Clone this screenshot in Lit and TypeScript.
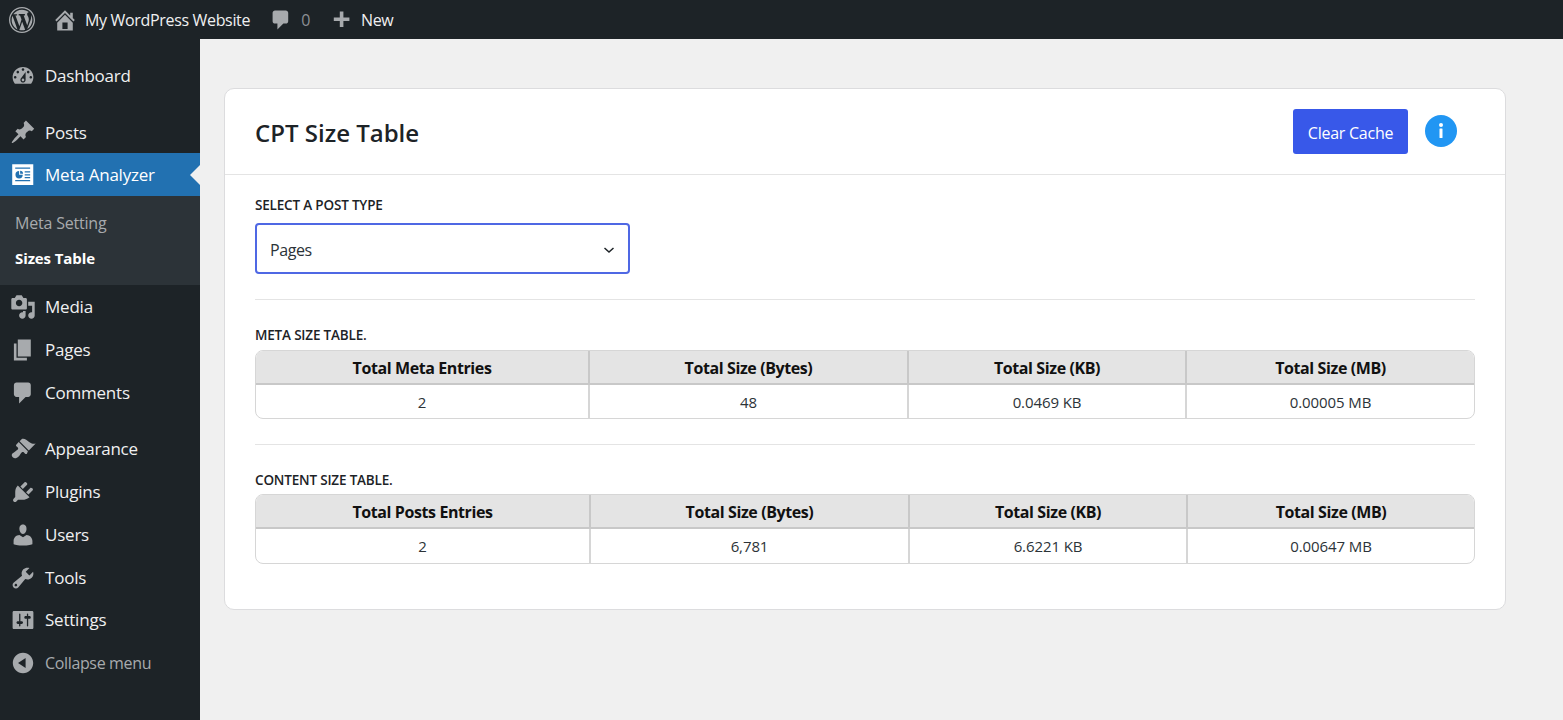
import { LitElement, html, css, svg } from "lit";
import { customElement } from "lit/decorators.js";

const icons: Record<string, string> = {
  wordpress: "M20 10c0-5.52-4.48-10-10-10S0 4.48 0 10s4.48 10 10 10 10-4.48 10-10zM10 1.01c4.97 0 8.99 4.02 8.99 8.99s-4.02 8.99-8.99 8.99S1.01 14.97 1.01 10 5.03 1.01 10 1.01zM8.01 14.82L4.96 6.61c.49-.03 1.05-.08 1.05-.08.43-.05.38-1.01-.06-.99 0 0-1.29.1-2.13.1-.15 0-.33 0-.52-.01 1.44-2.17 3.9-3.6 6.7-3.6 2.09 0 3.99.79 5.41 2.09-.6-.08-1.45.35-1.45 1.42 0 .66.38 1.22.79 1.88.31.54.5 1.22.5 2.21 0 1.34-1.27 4.48-1.27 4.48l-2.71-7.5c.48-.03.75-.16.75-.16.43-.05.38-1.1-.05-1.08 0 0-1.3.11-2.14.11-.78 0-2.11-.11-2.11-.11-.43-.02-.48 1.06-.05 1.08l.84.08 1.12 3.04zm6.02 2.15L16.64 10s.67-1.69.39-3.81c.63 1.14.94 2.42.94 3.81 0 2.96-1.56 5.58-3.94 6.97zM2.68 6.77L6.5 17.25c-2.67-1.3-4.47-4.08-4.47-7.25 0-1.16.2-2.23.65-3.23zm7.45 4.53l2.29 6.25c-.75.27-1.57.42-2.42.42-.72 0-1.41-.11-2.06-.3z",
  home: "M16 8.5l1.53 1.53-1.06 1.06L10 4.62l-6.47 6.47-1.06-1.06L10 2.5l4 4v-2h2v4zm-6-2.46l6 5.99V18H4v-5.97zM12 17v-5H8v5h4z",
  plus: "M17 7v3h-5v5H9v-5H4V7h5V2h3v5h5z",
  dashboard: "M3.76 16h12.48c1.1-1.37 1.76-3.11 1.76-5 0-4.42-3.58-8-8-8s-8 3.58-8 8c0 1.89.66 3.63 1.76 5zM10 4c.55 0 1 .45 1 1s-.45 1-1 1-1-.45-1-1 .45-1 1-1zM6 6c.55 0 1 .45 1 1s-.45 1-1 1-1-.45-1-1 .45-1 1-1zm8 0c.55 0 1 .45 1 1s-.45 1-1 1-1-.45-1-1 .45-1 1-1zm-5.37 5.55L12 7v6c0 1.1-.9 2-2 2s-2-.9-2-2c0-.57.24-1.08.63-1.45zM4 10c.55 0 1 .45 1 1s-.45 1-1 1-1-.45-1-1 .45-1 1-1zm12 0c.55 0 1 .45 1 1s-.45 1-1 1-1-.45-1-1 .45-1 1-1zm-5 3c0-.55-.45-1-1-1s-1 .45-1 1 .45 1 1 1 1-.45 1-1z",
  post: "M10.44 3.02l1.82-1.82 6.36 6.35-1.83 1.82c-1.05-.68-2.48-.57-3.41.36l-.75.75c-.92.93-1.04 2.35-.35 3.41l-1.83 1.82-2.41-2.41-2.8 2.79c-.42.42-3.38 2.71-3.8 2.29s1.86-3.39 2.28-3.81l2.79-2.79L4.1 9.36l1.83-1.82c1.05.69 2.48.57 3.4-.36l.75-.75c.93-.92 1.05-2.35.36-3.41z",
  media: "M13 11V4c0-.55-.45-1-1-1h-1.67L9 1H5L3.67 3H2c-.55 0-1 .45-1 1v7c0 .55.45 1 1 1h10c.55 0 1-.45 1-1zM7 4.5c1.38 0 2.5 1.12 2.5 2.5S8.38 9.5 7 9.5 4.5 8.38 4.5 7 5.62 4.5 7 4.5zM14 6h5v10.5c0 1.38-1.12 2.5-2.5 2.5S14 17.88 14 16.5s1.12-2.5 2.5-2.5c.17 0 .34.02.5.05V9h-3V6zm-4 8.05V13h2v3.5c0 1.38-1.12 2.5-2.5 2.5S7 17.88 7 16.5 8.12 14 9.5 14c.17 0 .34.02.5.05z",
  page: "M6 15V2h10v13H6zm-1 1h8v2H3V5h2v11z",
  comment: "M5 2h9c1.1 0 2 .9 2 2v7c0 1.1-.9 2-2 2h-2l-5 5v-5H5c-1.1 0-2-.9-2-2V4c0-1.1.9-2 2-2z",
  appearance: "M14.48 11.06L7.41 3.99l1.5-1.5c.5-.56 2.3-.47 3.51.32 1.21.8 1.43 1.28 2.91 2.1 1.18.64 2.45 1.26 4.45.85zm-.71.71L6.7 4.7 4.93 6.47c-.39.39-.39 1.02 0 1.41l1.06 1.06c.39.39.39 1.03 0 1.42-.6.6-1.43 1.11-2.21 1.69-.35.26-.7.53-1.01.84C1.43 13.23.78 15 2.14 16.36s3.13.71 4.47-.63c.31-.31.58-.66.84-1.01.58-.78 1.09-1.61 1.69-2.21.39-.39 1.03-.39 1.42 0l1.06 1.06c.39.39 1.02.39 1.41 0z",
  plugins: "M13.11 4.36L9.87 7.6 8 5.73l3.24-3.24c.35-.34 1.05-.2 1.56.32.52.51.66 1.21.31 1.55zm-8 1.77l.91-1.12 9.01 9.01-1.19.84c-.71.71-2.63 1.16-3.82 1.16H6.14L4.9 17.26c-.59.59-1.54.59-2.12 0-.59-.58-.59-1.53 0-2.12l1.24-1.24v-3.88c0-1.13.4-3.19 1.09-3.89zm7.26 3.97l3.24-3.24c.34-.35 1.04-.21 1.55.31.52.51.66 1.21.31 1.55l-3.24 3.25z",
  users: "M10 9.25c-2.27 0-2.73-3.44-2.73-3.44C7 4.02 7.82 2 9.97 2c2.16 0 2.98 2.02 2.71 3.81 0 0-.41 3.44-2.68 3.44zm0 2.57L12.72 10c2.39 0 4.52 2.33 4.52 4.53v2.49s-3.65 1.13-7.24 1.13c-3.65 0-7.24-1.13-7.24-1.13v-2.49c0-2.25 1.94-4.48 4.47-4.48z",
  tools: "M16.68 9.77c-1.34 1.34-3.3 1.67-4.95.99l-5.41 6.52c-.99.99-2.59.99-3.58 0s-.99-2.59 0-3.57l6.52-5.42c-.68-1.65-.35-3.61.99-4.95 1.28-1.28 3.12-1.62 4.72-1.06l-2.89 2.89 2.82 2.82 2.86-2.87c.53 1.58.18 3.39-1.08 4.65zM3.81 16.21c.4.39 1.04.39 1.43 0 .4-.4.4-1.04 0-1.43-.39-.4-1.03-.4-1.43 0-.39.39-.39 1.03 0 1.43z",
  settings: "M18 16V4c0-.55-.45-1-1-1H3c-.55 0-1 .45-1 1v12c0 .55.45 1 1 1h14c.55 0 1-.45 1-1zM8 11h1c.55 0 1 .45 1 1s-.45 1-1 1H8v1.5c0 .28-.22.5-.5.5s-.5-.22-.5-.5V13H6c-.55 0-1-.45-1-1s.45-1 1-1h1V5.5c0-.28.22-.5.5-.5s.5.22.5.5V11zm5-2h-1c-.55 0-1-.45-1-1s.45-1 1-1h1V5.5c0-.28.22-.5.5-.5s.5.22.5.5V7h1c.55 0 1 .45 1 1s-.45 1-1 1h-1v5.5c0 .28-.22.5-.5.5s-.5-.22-.5-.5V9z",
  collapse: "M10 2.16c4.33 0 7.84 3.51 7.84 7.84s-3.51 7.84-7.84 7.84S2.16 14.33 2.16 10 5.71 2.16 10 2.16zm2 11.72V6.12L6.18 9.97z",
  // white sheet with the pie and lines cut out of it
  analyzer: "M1.7 1.7H17.9V17.6H1.7zM4 4.2V5.2H15.500V4.2zM4 13.9V14.900H15.500V13.900zM7 7a2.800 2.800 0 1 0 2.800 2.800H7zM7.800 6.700V9H10.100A2.500 2.500 0 0 0 7.800 6.700zM11.300 7.200V8.100H15.500V7.200zM11.300 9.400V10.300H15.500V9.400zM11.300 11.600V12.500H15.500V11.600z",
};

const icon = (name: string) => html`<svg class="ico" viewBox="0 0 20 20">${svg`<path d=${icons[name]}></path>`}</svg>`;

type MenuItem = { label: string; icon: string; cls?: string };

const group1: MenuItem[] = [
  { label: "Dashboard", icon: "dashboard", cls: "first" },
  { label: "Posts", icon: "post", cls: "posts" },
  { label: "Meta Analyzer", icon: "analyzer", cls: "current" },
];
const group2: MenuItem[] = [
  { label: "Media", icon: "media" },
  { label: "Pages", icon: "page" },
  { label: "Comments", icon: "comment" },
  { label: "Appearance", icon: "appearance", cls: "gap" },
  { label: "Plugins", icon: "plugins" },
  { label: "Users", icon: "users" },
  { label: "Tools", icon: "tools" },
  { label: "Settings", icon: "settings", cls: "settings" },
  { label: "Collapse menu", icon: "collapse", cls: "collapse" },
];

const metaHead = ["Total Meta Entries", "Total Size (Bytes)", "Total Size (KB)", "Total Size (MB)"];
const metaRow = ["2", "48", "0.0469 KB", "0.00005 MB"];
const contentHead = ["Total Posts Entries", "Total Size (Bytes)", "Total Size (KB)", "Total Size (MB)"];
const contentRow = ["2", "6,781", "6.6221 KB", "0.00647 MB"];

@customElement("app-root")
export class AppRoot extends LitElement {
  static styles = css`
    :host {
      display: block;
      width: 1563px;
      height: 720px;
      overflow: hidden;
      background: #f0f0f0;
      color: #1d2327;
      font-family: "Open Sans", "Noto Sans", sans-serif;
    }
    * { box-sizing: border-box; }
    .ico { display: block; fill: currentColor; }

    .topbar {
      height: 39px;
      background: #1d2327;
      display: flex;
      align-items: center;
      color: #f0f0f1;
      font-size: 16px;
      letter-spacing: -0.33px;
    }
    .topbar .ico { color: #a7aaad; }
    .wp { width: 26px; height: 26px; margin-left: 9px; }
    .home { width: 26px; height: 26px; margin: 0 7px 0 17px; }
    .bubble { width: 24px; height: 24px; margin: 1px 0 0 19px; }
    .count { margin-left: 8px; color: #8c8f94; }
    .plus { width: 24px; height: 24px; margin: 3px 0 0 19px; }
    .new { margin-left: 8px; }

    .body { display: flex; height: 681px; }
    .side { width: 200px; background: #1d2327; flex: none; }
    .item {
      height: 43px;
      display: flex;
      align-items: center;
      color: #f0f0f1;
      font-size: 17px;
      letter-spacing: -0.22px;
      padding-left: 10px;
      position: relative;
    }
    .item .ico { width: 26px; height: 26px; color: #a7aaad; margin-right: 9px; flex: none; }
    .first { margin-top: 15px; }
    .posts { margin-top: 14px; height: 42px; }
    .gap { margin-top: 13px; }
    .settings { margin-top: -1px; }
    .current { background: #2271b1; color: #fff; }
    .current .ico { color: #fff; }
    .current::after {
      content: "";
      position: absolute;
      right: 0;
      top: 12px;
      border: 10px solid transparent;
      border-left: 0;
      border-right-color: #f0f0f0;
    }
    .sub {
      background: #2c3338;
      height: 89px;
      padding-top: 9px;
      font-size: 16px;
      letter-spacing: -0.2px;
    }
    .sub div { height: 35px; padding-left: 15px; display: flex; align-items: center; color: #a7aaad; }
    .sub .on { color: #fff; font-weight: 700; font-size: 15px; letter-spacing: -0.1px; }
    .collapse { color: #a7aaad; font-size: 16px; letter-spacing: -0.35px; }

    .main { flex: 1; padding: 49px 57px 0 24px; }
    .card {
      background: #fff;
      border: 1px solid #dcdcde;
      border-radius: 10px;
      height: 522px;
    }
    .head {
      height: 86px;
      border-bottom: 1px solid #e4e4e4;
      display: flex;
      align-items: center;
      padding: 0 48px 0 30px;
    }
    h1 {
      margin: 0;
      padding-top: 1px;
      font-size: 24px;
      font-weight: 600;
      color: #1d2327;
      flex: 1;
    }
    .btn {
      width: 115px;
      height: 45px;
      background: #3858e9;
      color: #fff;
      border: none;
      border-radius: 3px;
      font: inherit;
      font-size: 16px;
      letter-spacing: -0.25px;
      padding: 3px 0 0;
      margin-right: 17px;
    }
    .info { width: 32px; height: 32px; margin-top: -1px; display: block; }

    .content { padding: 21px 30px 0; }
    .label {
      font-size: 13.5px;
      font-weight: 600;
      text-transform: uppercase;
      letter-spacing: -0.18px;
      line-height: 18px;
      color: #1d2327;
    }
    .select {
      width: 375px;
      height: 51px;
      margin-top: 9px;
      border: 2px solid #4f68e4;
      border-radius: 4px;
      display: flex;
      align-items: center;
      justify-content: space-between;
      padding: 3px 12px 0 13px;
      font-size: 16px;
      letter-spacing: -0.4px;
      color: #2c3338;
    }
    .select svg { width: 14px; height: 14px; }
    hr { border: 0; border-top: 1px solid #e4e4e4; margin: 25px 0 26px; }
    .tbl {
      width: 100%;
      margin-top: 5px;
      border: 1px solid #d6d6d6;
      border-radius: 8px;
      overflow: hidden;
      display: grid;
    }
    .cols-a { grid-template-columns: 332px 319px 278px 1fr; margin-top: 6px; }
    .cols-b { grid-template-columns: 333px 319px 278px 1fr; }
    .cell {
      text-align: center;
      height: 34px;
      line-height: 35px;
      font-size: 15px;
      color: #2c3338;
      letter-spacing: -0.1px;
      border-left: 2px solid #d6d6d6;
      overflow: hidden;
    }
    .cols-a .cell { height: 33px; line-height: 34px; }
    .cell.th, .cols-a .cell.th {
      height: 34px;
      line-height: 34px;
      font-size: 16px;
      letter-spacing: -0.4px;
      background: #e4e4e4;
      color: #111;
      font-weight: 700;
      border-left-color: #c8c8c8;
      border-bottom: 2px solid #c8c8c8;
    }
    .cell.lead { border-left: 0; }
  `;

  private menu(items: MenuItem[]) {
    return items.map(
      (m) => html`<div class="item ${m.cls ?? ""}">${icon(m.icon)}<span>${m.label}</span></div>`
    );
  }

  private table(head: string[], row: string[], cols: string) {
    return html`<div class="tbl ${cols}">
      ${head.map((h, i) => html`<div class="cell th ${i === 0 ? "lead" : ""}">${h}</div>`)}
      ${row.map((c, i) => html`<div class="cell ${i === 0 ? "lead" : ""}">${c}</div>`)}
    </div>`;
  }

  render() {
    return html`
      <div class="topbar">
        <svg class="ico wp" viewBox="0 0 20 20"><path d=${icons.wordpress}></path></svg>
        <svg class="ico home" viewBox="0 0 20 20"><path d=${icons.home}></path></svg>
        <span>My WordPress Website</span>
        <svg class="ico bubble" viewBox="0 0 20 20"><path d=${icons.comment}></path></svg>
        <span class="count">0</span>
        <svg class="ico plus" viewBox="0 0 20 20"><path d=${icons.plus}></path></svg>
        <span class="new">New</span>
      </div>
      <div class="body">
        <nav class="side">
          ${this.menu(group1)}
          <div class="sub">
            <div>Meta Setting</div>
            <div class="on">Sizes Table</div>
          </div>
          ${this.menu(group2)}
        </nav>
        <main class="main">
          <section class="card">
            <header class="head">
              <h1>CPT Size Table</h1>
              <button class="btn">Clear Cache</button>
              <svg class="info" viewBox="0 0 32 32">
                <circle cx="16" cy="16" r="16" fill="#2196f3"></circle>
                <circle cx="16" cy="10" r="2" fill="#fff"></circle>
                <rect x="14.500" y="13.500" width="3" height="9.500" rx="0.500" fill="#fff"></rect>
              </svg>
            </header>
            <div class="content">
              <div class="label">Select a post type</div>
              <div class="select">
                <span>Pages</span>
                <svg viewBox="0 0 14 14"><path d="M2.500 5l4.500 4 4.500-4" fill="none" stroke="#1d2327" stroke-width="1.500"></path></svg>
              </div>
              <hr />
              <div class="label">Meta Size Table.</div>
              ${this.table(metaHead, metaRow, "cols-a")}
              <hr />
              <div class="label">Content Size Table.</div>
              ${this.table(contentHead, contentRow, "cols-b")}
            </div>
          </section>
        </main>
      </div>
    `;
  }
}
